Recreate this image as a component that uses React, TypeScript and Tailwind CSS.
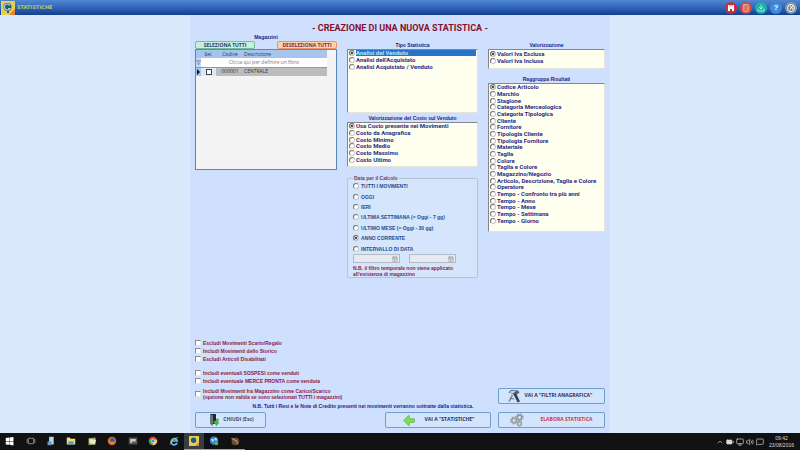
import { type ReactNode } from 'react';
import { ArrowBigLeft, BatteryMedium, Calculator, CalendarDays, ChevronUp, Download, Filter, MessageSquare, Monitor, Volume2, X } from 'lucide-react';
import { clsx } from 'clsx';

const costOptions = [
  'Usa Costo presente nei Movimenti',
  'Costo da Anagrafica',
  'Costo Minimo',
  'Costo Medio',
  'Costo Massimo',
  'Costo Ultimo',
];

const groupOptions = [
  'Codice Articolo',
  'Marchio',
  'Stagione',
  'Categoria Merceologica',
  'Categoria Tipologica',
  'Cliente',
  'Fornitore',
  'Tipologia Cliente',
  'Tipologia Fornitore',
  'Materiale',
  'Taglia',
  'Colore',
  'Taglia e Colore',
  'Magazzino/Negozio',
  'Articolo, Descrizione, Taglia e Colore',
  'Operatore',
  'Tempo - Confronto tra più anni',
  'Tempo - Anno',
  'Tempo - Mese',
  'Tempo - Settimana',
  'Tempo - Giorno',
];

const dateOptions = [
  'TUTTI I MOVIMENTI',
  'OGGI',
  'IERI',
  'ULTIMA SETTIMANA (= Oggi - 7 gg)',
  'ULTIMO MESE (= Oggi - 30 gg)',
  'ANNO CORRENTE',
  'INTERVALLO DI DATA',
];

const radioClass =
  'size-[6px] shrink-0 appearance-none rounded-full border border-[#77777a] border-r-[#c8c8c8] border-b-[#c8c8c8] bg-white checked:bg-[#111] checked:shadow-[inset_0_0_0_1px_#fff]';

const checkboxClass =
  'size-[6px] shrink-0 appearance-none border border-[#8b8b90] border-r-[#e6e6e6] border-b-[#e6e6e6] bg-white checked:bg-[#222]';

function OptionList({ name, options, className, rows, highlight }: {
  name: string;
  options: string[];
  className: string;
  rows: string;
  highlight?: boolean;
}) {
  return (
    <div
      role="radiogroup"
      aria-label={name}
      className={clsx('border border-t-[#85858a] border-l-[#85858a] border-r-[#e4e4dc] border-b-[#e4e4dc] bg-[#fffff0] px-px', className)}
    >
      <div className={clsx('grid auto-rows-fr', rows)}>
        {options.map((option, i) => (
          <label key={option} className="flex items-center gap-px font-['Roboto',sans-serif] text-[6px] leading-[6px] font-bold whitespace-nowrap text-[#2b2b86]">
            <input type="radio" name={name} defaultChecked={i === 0} className={radioClass} />
            <span className={clsx('flex-1', highlight && i === 0 && 'bg-[#2673c8] text-[#b4e4ff]')}>{option}</span>
          </label>
        ))}
      </div>
    </div>
  );
}

function ListTitle({ children }: { children: ReactNode }) {
  return <h2 className="text-center text-[5px] leading-[8px] font-bold text-[#1c1c7c]">{children}</h2>;
}

function Check({ children }: { children: ReactNode }) {
  return (
    <label className="flex items-center gap-0.5 text-[5px] leading-[6px] font-bold text-[#8a1c3c]">
      <input type="checkbox" className={checkboxClass} />
      <span>{children}</span>
    </label>
  );
}

function ActionButton({ icon, className, children }: { icon: ReactNode; className: string; children: ReactNode }) {
  return (
    <button
      type="button"
      className={clsx(
        "flex h-4 items-center rounded-[2px] border border-[#6f9fce] bg-[#d3e4fd] px-2 font-['Open_Sans',sans-serif] text-[5px] font-bold",
        className,
      )}
    >
      {icon}
      <span className="flex-1 text-center whitespace-nowrap">{children}</span>
    </button>
  );
}

function AppLogo({ className }: { className: string }) {
  return (
    <svg viewBox="0 0 14 14" className={className} aria-hidden="true">
      <rect width="14" height="14" fill="#e3cf52" />
      <path d="M8 14 14 8v6z" fill="#e2803a" />
      <circle cx="6.5" cy="6" r="4" fill="#27577c" />
      <path d="M9 4.5A3 3 0 1 0 9 7.5H7" fill="none" stroke="#a9d4d8" strokeWidth="1.2" />
      <path d="M6 10h2v2H6z" fill="#365a3c" />
    </svg>
  );
}

function DoorIcon() {
  return (
    <svg viewBox="0 0 12 14" className="ml-1 h-3.5 w-3" aria-hidden="true">
      <path d="M2 1h6v10H2z" fill="#20262c" />
      <path d="M2 1l3 1.500V13l-3-2z" fill="#69757f" />
      <path d="M5 8.500 8.500 13 11.500 9.500 10 9 11 6 8.500 5.500 7.500 8z" fill="#45b345" />
    </svg>
  );
}

function FilterToolIcon() {
  return (
    <svg viewBox="0 0 14 14" className="size-3.5" aria-hidden="true">
      <path d="M1.500 3.500 4 1l7 .5 1.500 2L9 6z" fill="#4d6072" />
      <path d="M2.500 3.500 4.500 1.800 9 2.200 6 4.500z" fill="#c5d6e6" />
      <path d="M6 4.500 9.500 5 13 12.500 10.500 13.500z" fill="#34485c" />
      <path d="M5.500 6 2 12.500" stroke="#7f93a6" strokeWidth="1.600" />
      <path d="M3 9.500l4 .5" stroke="#5d7286" />
    </svg>
  );
}

function GearsIcon() {
  return (
    <svg viewBox="0 0 16 14" className="ml-0.5 h-3.5 w-4" fill="none" aria-hidden="true">
      <circle cx="10.500" cy="4.500" r="3.400" stroke="#9ba1a7" strokeWidth="1.800" strokeDasharray="1.500 1.170" />
      <circle cx="10.500" cy="4.500" r="2.200" stroke="#8d949b" strokeWidth="1.500" />
      <circle cx="5" cy="7.500" r="3.400" stroke="#a9afb5" strokeWidth="1.800" strokeDasharray="1.500 1.170" />
      <circle cx="5" cy="7.500" r="2.200" stroke="#959ba2" strokeWidth="1.500" />
      <circle cx="10.500" cy="10.800" r="1.900" stroke="#9ba1a7" strokeWidth="1.600" />
    </svg>
  );
}

function TitleBar() {
  return (
    <header className="flex h-[15px] shrink-0 items-center justify-between bg-linear-to-b from-[#5288cf] via-[#2f66b8] to-[#123f8f] pr-[3px] pl-px">
      <div className="flex items-center gap-0.5">
        <AppLogo className="size-[14px]" />
        <span className="font-['DejaVu_Sans',sans-serif] text-[5px] font-bold text-[#b4cc62]">STATISTICHE</span>
      </div>
      <div className="flex items-center gap-[3px]">
        <button type="button" aria-label="Cerca" className="flex size-3 items-center justify-center rounded-full bg-[#c62f3e] text-white">
          <svg viewBox="0 0 16 16" className="size-2" fill="currentColor" aria-hidden="true">
            <path d="M2 2h3v3h1.500V2h3v3H11V2h3v12h-4v-4H6v4H2z" />
          </svg>
        </button>
        <button type="button" aria-label="Calcolatrice" className="flex size-3 items-center justify-center rounded-full bg-[#d04a42] text-[#ffd9b8]">
          <Calculator className="size-2" />
        </button>
        <button type="button" aria-label="Scarica" className="flex size-3 items-center justify-center rounded-full bg-[#17b3a8] text-white">
          <Download className="size-2" />
        </button>
        <button type="button" aria-label="Aiuto" className="flex size-3 items-center justify-center rounded-full bg-[#3d8ad6] text-[8px] leading-none font-bold text-white">
          ?
        </button>
        <button type="button" aria-label="Chiudi" className="flex size-3 items-center justify-center rounded-full bg-[#82979d]">
          <span className="flex size-2 items-center justify-center rounded-full border border-white bg-[#74888e] text-white">
            <X className="size-[5px]" strokeWidth={5} />
          </span>
        </button>
      </div>
    </header>
  );
}

function WarehousePanel() {
  return (
    <section className="flex flex-col">
      <ListTitle>Magazzini</ListTitle>
      <div className="flex justify-between font-['Open_Sans',sans-serif] text-[5px] leading-[6px] font-bold">
        <button type="button" className="h-2 w-[60px] rounded-[2px] border border-[#6fbf98] bg-[#c9f0dc] text-[#20406c]">SELEZIONA TUTTI</button>
        <button type="button" className="h-2 w-[60px] rounded-[2px] border border-[#e89468] bg-[#ffd0ac] text-[#7c2c3c]">DESELEZIONA TUTTI</button>
      </div>
      <div className="h-[121px] border border-[#5b86b8] bg-[#f4f4f4] font-['Open_Sans',sans-serif]">
        <div className="pr-[9px]">
          <table className="w-full table-fixed border-collapse text-left text-[5px] leading-[7px] text-[#2c3444]">
            <colgroup>
              <col className="w-[5px]" />
              <col className="w-[15px]" />
              <col className="w-[28px]" />
              <col />
            </colgroup>
            <thead>
              <tr className="h-2 bg-[#a5c5ee]">
                <th className="p-0" />
                <th className="p-0 text-center font-normal">Sel.</th>
                <th className="p-0 text-center font-normal">Codice</th>
                <th className="p-0 font-normal">Descrizione</th>
              </tr>
            </thead>
            <tbody>
              <tr className="h-[9px] bg-white text-[#777]">
                <td className="bg-[#c4d9f5] p-0">
                  <Filter className="size-[5px] text-[#334]" />
                </td>
                <td colSpan={3} className="p-0 text-center">Clicca qui per definire un filtro</td>
              </tr>
              <tr className="h-[9px] border-t border-[#7c9cc8] bg-[#bcbcbc]">
                <td className="bg-[#a5c5ee] p-0">
                  <svg viewBox="0 0 5 6" className="h-[6px] w-[5px]" aria-hidden="true">
                    <path d="M1 0l3 3-3 3z" fill="#111" />
                  </svg>
                </td>
                <td className="bg-[#dce9f9] p-0">
                  <input type="checkbox" aria-label="Seleziona CENTRALE" className="mx-auto block size-[6px] appearance-none border border-[#444] bg-white checked:bg-[#222]" />
                </td>
                <td className="p-0 text-center">000001</td>
                <td className="p-0">CENTRALE</td>
              </tr>
            </tbody>
          </table>
        </div>
      </div>
    </section>
  );
}

function DateField({ label }: { label: string }) {
  return (
    <div className="flex h-[9px] w-[47px] items-center border border-[#b4bcc8] bg-[#e6ebf0] pr-px">
      <input type="text" aria-label={label} disabled className="h-full w-0 flex-1 text-[5px]" />
      <CalendarDays className="size-[6px] text-[#8a8f98]" />
    </div>
  );
}

function DateRange() {
  return (
    <fieldset className="mt-2 h-[103px] rounded-[2px] border border-[#b3c2d6] bg-[#d4e5fc] px-[5px] text-[5px] leading-[6px] font-bold">
      <legend className="bg-[#d0e1fe] px-px text-[#6e3c5c]">Data per il Calcolo</legend>
      <div className="grid h-[73px] auto-rows-fr">
        {dateOptions.map((option) => (
          <label key={option} className="flex items-center gap-0.5 text-[#1f4f8c]">
            <input type="radio" name="periodo" defaultChecked={option === 'ANNO CORRENTE'} className={radioClass} />
            {option}
          </label>
        ))}
      </div>
      <div className="flex gap-[9px]">
        <DateField label="Dal" />
        <DateField label="Al" />
      </div>
      <p className="mt-0.5 text-[#8a1c3c]">
        N.B. il filtro temporale non viene applicato
        <br />
        all'esistenza di magazzino
      </p>
    </fieldset>
  );
}

const taskIcons: { name: string; icon: ReactNode; state?: string }[] = [
  { name: 'Start', icon: <path d="M1 2.500 5.500 2v4.500H1zM6 2l5-.7v5.200H6zM1 7h4.500v4.500L1 11zM6 7h5v5.200L6 11.500z" fill="#fff" /> },
  { name: 'Visualizzazione attività', icon: <path d="M3 3h7v7H3zM1.500 4v5M11.500 4v5" fill="none" stroke="#aaa" /> },
  { name: 'Server', icon: <><path d="M4 1h6v10H4z" fill="#b8d4e8" /><path d="M2 7h5v5H2z" fill="#6c9cc4" /></> },
  { name: 'Esplora file', icon: <><path d="M1 2h4l1 1.500h6V11H1z" fill="#f6d978" /><path d="M3 7h7v4H3z" fill="#4aa3dc" /></> },
  { name: 'Note', icon: <><path d="M2 3l9-1v9l-9 1z" fill="#8fae5c" /><path d="M3 4l9 1-2 6-7-2z" fill="#ece9c4" /></> },
  { name: 'Firefox', icon: <><circle cx="6.500" cy="6.500" r="5.500" fill="#e5642a" /><circle cx="7" cy="5.500" r="3" fill="#2f63a8" /><path d="M2 4c1 4 4 5 8 3-2 4-7 4-8-3z" fill="#f5a13a" /></> },
  { name: 'Console', icon: <><path d="M1 2h11v9H1z" fill="#555" /><path d="M3 4h7v3H5v2H3z" fill="#ccc" /></> },
  { name: 'Chrome', icon: <><circle cx="6.500" cy="6.500" r="5.500" fill="#dd4b3e" /><path d="M6.500 6.500 1.700 4A5.500 5.500 0 0 0 6 12z" fill="#3aa757" /><path d="M6.500 6.500 6 12a5.500 5.500 0 0 0 5.500-7.500z" fill="#f7cb3d" /><circle cx="6.500" cy="6.500" r="2.400" fill="#4a8af4" stroke="#fff" strokeWidth=".7" /></> },
  { name: 'Internet Explorer', icon: <><path d="M10.500 9A4 4 0 1 1 10.700 6.500H4" fill="none" stroke="#5cc1ee" strokeWidth="2.200" /><path d="M1.500 11C3 6 8 2 12 2" fill="none" stroke="#e8d36a" strokeWidth=".8" /></> },
  { name: 'Statistiche', state: 'active', icon: <><path d="M0 0h13v13H0z" fill="#e3cf52" /><circle cx="6" cy="5.500" r="3.500" fill="#27577c" /><path d="M8 13l5-5v5z" fill="#e2803a" /></> },
  { name: 'Assistenza', state: 'open', icon: <><circle cx="6.500" cy="6" r="5.500" fill="#3f7fd0" /><path d="M3 4h3v3H4zM7 3h3v3H8z" fill="#dcecff" /><circle cx="9.500" cy="9.500" r="2.500" fill="#49b84e" /></> },
  { name: 'Strumenti', state: 'open', icon: <><circle cx="7" cy="7" r="5" fill="#6b4a33" /><path d="M2 3l6 3 2 4" fill="none" stroke="#b59a7c" strokeWidth="1.500" /></> },
];

function Taskbar() {
  return (
    <footer className="flex h-[17px] shrink-0 items-center justify-between bg-[#101112] pr-1.5 text-[#d8d8d8]">
      <nav aria-label="Applicazioni" className="flex h-full w-[245px]">
        {taskIcons.map((item) => (
          <button
            key={item.name}
            type="button"
            aria-label={item.name}
            className={clsx(
              'flex flex-1 items-center justify-center border-b',
              item.state === 'active' && 'border-[#76a9d8] bg-[#3a3d40]',
              item.state === 'open' && 'border-[#76a9d8]',
              !item.state && 'border-transparent',
            )}
          >
            <svg viewBox="0 0 13 13" className="size-[10px]" aria-hidden="true">{item.icon}</svg>
          </button>
        ))}
      </nav>
      <div className="flex items-center gap-0.5">
        <ChevronUp className="size-2" />
        <BatteryMedium className="size-2" fill="currentColor" />
        <Monitor className="size-2" />
        <Volume2 className="size-2" />
        <MessageSquare className="size-2" />
        <div className="ml-[3px] text-center text-[5px] leading-[7px]">
          <div>09:42</div>
          <div>23/08/2016</div>
        </div>
      </div>
    </footer>
  );
}

export default function App() {
  return (
    <div className="flex min-h-screen flex-col bg-[#d9e8fb] font-['Liberation_Sans',Arial,sans-serif]">
      <TitleBar />

      <main className="mx-auto flex w-full max-w-[420px] flex-1 flex-col bg-[#cfe0ff] px-[5px] pt-2 pb-[5px]">
        <h1 className="text-center font-['Roboto',sans-serif] text-[9px] leading-[10px] font-bold text-[#85102c]">- CREAZIONE DI UNA NUOVA STATISTICA -</h1>

        <div className="grid grid-cols-[142fr_131fr_117fr] items-start gap-x-2.5">
          <WarehousePanel />

          <section className="pt-2">
            <ListTitle>Tipo Statistica</ListTitle>
            <OptionList
              name="Tipo Statistica"
              options={['Analisi del Venduto', "Analisi dell'Acquistato", 'Analisi Acquistato / Venduto']}
              className="h-16"
              rows="h-5"
              highlight
            />
            <div className="pt-px">
              <ListTitle>Valorizzazione del Costo sul Venduto</ListTitle>
            </div>
            <OptionList name="Valorizzazione del Costo sul Venduto" options={costOptions} className="h-[45px]" rows="h-10" />
            <DateRange />
          </section>

          <section className="pt-2">
            <ListTitle>Valorizzazione</ListTitle>
            <OptionList name="Valorizzazione" options={['Valori Iva Esclusa', 'Valori Iva Inclusa']} className="h-5" rows="h-[14px]" />
            <div className="pt-1.5">
              <ListTitle>Raggruppa Risultati</ListTitle>
            </div>
            <OptionList name="Raggruppa Risultati" options={groupOptions} className="h-[149px]" rows="h-[140px]" />
          </section>
        </div>

        <div className="mt-auto grid grid-cols-[1fr_107px] gap-x-[7px]">
          <div>
            <div className="flex flex-col gap-0.5">
              <Check>Escludi Movimenti Scarto/Regalo</Check>
              <Check>Includi Movimenti dello Storico</Check>
              <Check>Escludi Articoli Disabilitati</Check>
            </div>
            <div className="mt-2 flex flex-col gap-0.5">
              <Check>Includi eventuali SOSPESI come venduti</Check>
              <Check>Includi eventuale MERCE PRONTA come venduta</Check>
              <div className="pt-0.5">
                <Check>
                  Includi Movimenti fra Magazzino come Carico/Scarico
                  <br />
                  (opzione non valida se sono selezionati TUTTI i magazzini)
                </Check>
              </div>
            </div>
            <p className="mt-0.5 mb-0.5 pl-10 text-center text-[5px] leading-[8px] font-bold text-[#1c1c8c]">
              N.B. Tutti i Resi e le Note di Credito presenti nei movimenti verranno sottratte dalla statistica.
            </p>
            <div className="flex justify-between">
              <ActionButton className="w-[71px] text-[#2a4a80]" icon={<DoorIcon />}>CHIUDI (Esc)</ActionButton>
              <ActionButton
                className="w-[106px] text-[#1f2f58]"
                icon={<ArrowBigLeft className="ml-2 size-[15px] fill-[#7fdc58] text-[#4fae3c]" strokeWidth={1} />}
              >
                VAI A "STATISTICHE"
              </ActionButton>
            </div>
          </div>

          <div className="flex flex-col justify-end gap-2">
            <ActionButton className="text-[#1f2f58]" icon={<FilterToolIcon />}>
              VAI A "FILTRI ANAGRAFICA"
            </ActionButton>
            <ActionButton className="text-[#dc2a4c]" icon={<GearsIcon />}>
              <span className="pl-3">ELABORA STATISTICA</span>
            </ActionButton>
          </div>
        </div>
      </main>

      <Taskbar />
    </div>
  );
}
